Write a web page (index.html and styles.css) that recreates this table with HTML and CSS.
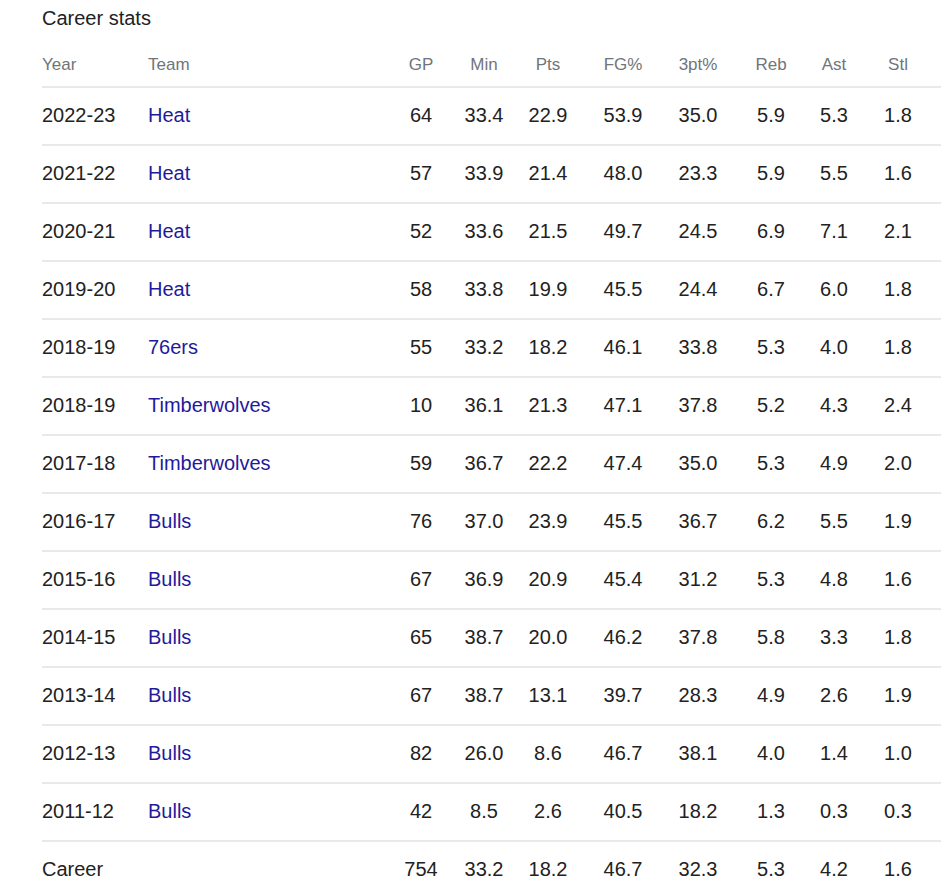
FILE: index.html
```html
<!DOCTYPE html>
<html>
<head>
<meta charset="utf-8">
<link rel="stylesheet" href="styles.css">
</head>
<body>
<div class="card">
  <div class="title">Career stats</div>
  <div class="row head">
    <div>Year</div><div>Team</div><div class="n">GP</div><div class="n">Min</div><div class="n">Pts</div><div class="n">FG%</div><div class="n">3pt%</div><div class="n">Reb</div><div class="n">Ast</div><div class="n">Stl</div>
  </div>
  <div class="row"><div>2022-23</div><div class="team">Heat</div><div class="n">64</div><div class="n">33.4</div><div class="n">22.9</div><div class="n">53.9</div><div class="n">35.0</div><div class="n">5.9</div><div class="n">5.3</div><div class="n">1.8</div></div>
  <div class="row"><div>2021-22</div><div class="team">Heat</div><div class="n">57</div><div class="n">33.9</div><div class="n">21.4</div><div class="n">48.0</div><div class="n">23.3</div><div class="n">5.9</div><div class="n">5.5</div><div class="n">1.6</div></div>
  <div class="row"><div>2020-21</div><div class="team">Heat</div><div class="n">52</div><div class="n">33.6</div><div class="n">21.5</div><div class="n">49.7</div><div class="n">24.5</div><div class="n">6.9</div><div class="n">7.1</div><div class="n">2.1</div></div>
  <div class="row"><div>2019-20</div><div class="team">Heat</div><div class="n">58</div><div class="n">33.8</div><div class="n">19.9</div><div class="n">45.5</div><div class="n">24.4</div><div class="n">6.7</div><div class="n">6.0</div><div class="n">1.8</div></div>
  <div class="row"><div>2018-19</div><div class="team">76ers</div><div class="n">55</div><div class="n">33.2</div><div class="n">18.2</div><div class="n">46.1</div><div class="n">33.8</div><div class="n">5.3</div><div class="n">4.0</div><div class="n">1.8</div></div>
  <div class="row"><div>2018-19</div><div class="team">Timberwolves</div><div class="n">10</div><div class="n">36.1</div><div class="n">21.3</div><div class="n">47.1</div><div class="n">37.8</div><div class="n">5.2</div><div class="n">4.3</div><div class="n">2.4</div></div>
  <div class="row"><div>2017-18</div><div class="team">Timberwolves</div><div class="n">59</div><div class="n">36.7</div><div class="n">22.2</div><div class="n">47.4</div><div class="n">35.0</div><div class="n">5.3</div><div class="n">4.9</div><div class="n">2.0</div></div>
  <div class="row"><div>2016-17</div><div class="team">Bulls</div><div class="n">76</div><div class="n">37.0</div><div class="n">23.9</div><div class="n">45.5</div><div class="n">36.7</div><div class="n">6.2</div><div class="n">5.5</div><div class="n">1.9</div></div>
  <div class="row"><div>2015-16</div><div class="team">Bulls</div><div class="n">67</div><div class="n">36.9</div><div class="n">20.9</div><div class="n">45.4</div><div class="n">31.2</div><div class="n">5.3</div><div class="n">4.8</div><div class="n">1.6</div></div>
  <div class="row"><div>2014-15</div><div class="team">Bulls</div><div class="n">65</div><div class="n">38.7</div><div class="n">20.0</div><div class="n">46.2</div><div class="n">37.8</div><div class="n">5.8</div><div class="n">3.3</div><div class="n">1.8</div></div>
  <div class="row"><div>2013-14</div><div class="team">Bulls</div><div class="n">67</div><div class="n">38.7</div><div class="n">13.1</div><div class="n">39.7</div><div class="n">28.3</div><div class="n">4.9</div><div class="n">2.6</div><div class="n">1.9</div></div>
  <div class="row"><div>2012-13</div><div class="team">Bulls</div><div class="n">82</div><div class="n">26.0</div><div class="n">8.6</div><div class="n">46.7</div><div class="n">38.1</div><div class="n">4.0</div><div class="n">1.4</div><div class="n">1.0</div></div>
  <div class="row"><div>2011-12</div><div class="team">Bulls</div><div class="n">42</div><div class="n">8.5</div><div class="n">2.6</div><div class="n">40.5</div><div class="n">18.2</div><div class="n">1.3</div><div class="n">0.3</div><div class="n">0.3</div></div>
  <div class="row last"><div>Career</div><div></div><div class="n">754</div><div class="n">33.2</div><div class="n">18.2</div><div class="n">46.7</div><div class="n">32.3</div><div class="n">5.3</div><div class="n">4.2</div><div class="n">1.6</div></div>
</div>
</body>
</html>
```
FILE: styles.css
```css
html, body {
  margin: 0;
  padding: 0;
  background: #ffffff;
}
body {
  font-family: "Liberation Sans", Arial, sans-serif;
  color: #202124;
}
.card {
  padding-left: 42px;
  padding-top: 6px;
}
.title {
  font-size: 20px;
  line-height: 24px;
  color: #202124;
  height: 34px;
}
.row {
  display: grid;
  grid-template-columns: 106px 242px 62px 64px 64px 86px 64px 82px 44px 84px;
  align-items: center;
  height: 54px;
  padding-bottom: 2px;
  border-top: 2px solid #e9e9e9;
  font-size: 20px;
  color: #222222;
}
.row.head {
  border-top: none;
  height: 42px;
  padding-top: 4px;
  padding-bottom: 0;
  font-size: 17px;
  color: #70757a;
}
.row .n {
  text-align: center;
}
.team {
  color: #1f1a9c;
}
```
